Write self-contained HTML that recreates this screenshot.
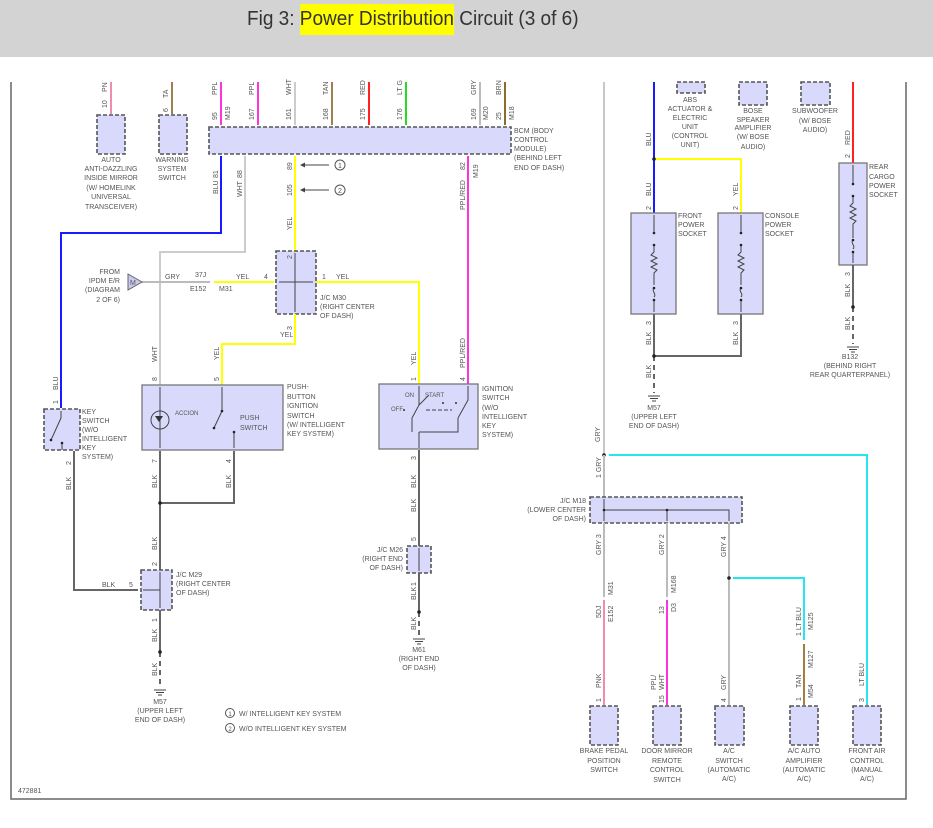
<!DOCTYPE html>
<html><head><meta charset="utf-8"><style>
html,body{margin:0;padding:0;background:#fff;width:933px;height:828px;overflow:hidden}
.hdr{position:absolute;left:0;top:0;width:933px;height:57px;background:#d3d3d3}
.ttl{position:absolute;left:247px;top:8px;font:20px "Liberation Sans",sans-serif;color:#333;white-space:nowrap;transform:scaleX(0.95);transform-origin:0 0}
.hl{background:#ffff00;padding:4px 0 5px}
svg{position:absolute;left:0;top:0}
text{font-family:"Liberation Sans",sans-serif;font-size:7px;fill:#555}
.c{text-anchor:middle}.r{text-anchor:end}
.box{fill:#d9d9fb;stroke:#555;stroke-width:1.6;stroke-dasharray:4,2}
.sbox{fill:#d9d9fb;stroke:#777;stroke-width:1.3}
.w{fill:none;stroke-width:2}
</style></head><body>
<div class="hdr"></div>
<div class="ttl">Fig 3: <span class="hl">Power Distribution</span> Circuit (3 of 6)</div>
<svg width="933" height="828" viewBox="0 0 933 828">
<path d="M11 82V799H906V82" fill="none" stroke="#666" stroke-width="1.5"/>
<line x1="111" y1="82" x2="111" y2="114" stroke="#f08cb0" class="w"/>
<line x1="172" y1="82" x2="172" y2="114" stroke="#a0804a" class="w"/>
<line x1="221" y1="82" x2="221" y2="125" stroke="#ff33dd" class="w"/>
<line x1="258" y1="82" x2="258" y2="125" stroke="#ff33dd" class="w"/>
<line x1="295" y1="82" x2="295" y2="125" stroke="#cccccc" class="w"/>
<line x1="332" y1="82" x2="332" y2="125" stroke="#a0804a" class="w"/>
<line x1="369" y1="82" x2="369" y2="125" stroke="#ff2020" class="w"/>
<line x1="406" y1="82" x2="406" y2="125" stroke="#22dd22" class="w"/>
<line x1="480" y1="82" x2="480" y2="125" stroke="#bbbbbb" class="w"/>
<line x1="505" y1="82" x2="505" y2="125" stroke="#8b6d2a" class="w"/>
<g>
<text transform="translate(107,108) rotate(-90)">10</text><text transform="translate(107,92) rotate(-90)">PN</text>
<text transform="translate(168,98) rotate(-90)">TA</text><text transform="translate(168,112) rotate(-90)">6</text>
<text transform="translate(217,120) rotate(-90)">95</text><text transform="translate(217,95) rotate(-90)">PPL</text><text transform="translate(230,120) rotate(-90)">M19</text>
<text transform="translate(254,120) rotate(-90)">167</text><text transform="translate(254,95) rotate(-90)">PPL</text>
<text transform="translate(291,120) rotate(-90)">161</text><text transform="translate(291,95) rotate(-90)">WHT</text>
<text transform="translate(328,120) rotate(-90)">168</text><text transform="translate(328,95) rotate(-90)">TAN</text>
<text transform="translate(365,120) rotate(-90)">175</text><text transform="translate(365,95) rotate(-90)">RED</text>
<text transform="translate(402,120) rotate(-90)">176</text><text transform="translate(402,95) rotate(-90)">LT G</text>
<text transform="translate(476,120) rotate(-90)">169</text><text transform="translate(476,95) rotate(-90)">GRY</text><text transform="translate(488,120) rotate(-90)">M20</text>
<text transform="translate(501,120) rotate(-90)">25</text><text transform="translate(501,95) rotate(-90)">BRN</text><text transform="translate(514,120) rotate(-90)">M18</text>
</g>
<rect x="97" y="115" width="28" height="39" class="box"/>
<rect x="159" y="115" width="28" height="39" class="box"/>
<text class="c" x="111" y="162">AUTO</text><text class="c" x="111" y="171">ANTI-DAZZLING</text><text class="c" x="111" y="180">INSIDE MIRROR</text><text class="c" x="111" y="190">(W/ HOMELINK</text><text class="c" x="111" y="199">UNIVERSAL</text><text class="c" x="111" y="209">TRANSCEIVER)</text>
<text class="c" x="172" y="162">WARNING</text><text class="c" x="172" y="171">SYSTEM</text><text class="c" x="172" y="180">SWITCH</text>
<rect x="209" y="127" width="302" height="27" class="box"/>
<text x="514" y="133">BCM (BODY</text><text x="514" y="142">CONTROL</text><text x="514" y="151">MODULE)</text><text x="514" y="160">(BEHIND LEFT</text><text x="514" y="170">END OF DASH)</text>
<path d="M221 156V233H61V408" stroke="#1a1aff" class="w"/>
<path d="M245 156V252H160V385" stroke="#cccccc" class="w"/>
<path d="M295 156V251" stroke="#ffff00" class="w"/>
<path d="M468 156V384" stroke="#ff33dd" class="w"/>
<text transform="translate(218,178) rotate(-90)">81</text><text transform="translate(218,194) rotate(-90)">BLU</text>
<text transform="translate(242,178) rotate(-90)">88</text><text transform="translate(242,197) rotate(-90)">WHT</text>
<text transform="translate(292,170) rotate(-90)">89</text><text transform="translate(292,196) rotate(-90)">105</text><text transform="translate(292,230) rotate(-90)">YEL</text>
<text transform="translate(465,170) rotate(-90)">82</text><text transform="translate(465,210) rotate(-90)">PPL/RED</text><text transform="translate(478,178) rotate(-90)">M19</text>
<path d="M302 165H329M302 190H329" stroke="#444" stroke-width="1"/>
<path d="M300 165l5-2.5v5zM300 190l5-2.5v5z" fill="#444"/>
<circle cx="340" cy="165" r="5" fill="none" stroke="#555"/><text class="c" x="340" y="168">1</text>
<circle cx="340" cy="190" r="5" fill="none" stroke="#555"/><text class="c" x="340" y="193">2</text>
<rect x="276" y="251" width="40" height="63" class="box"/>
<path d="M295 253V312M279 282H313" stroke="#444" stroke-width="1" fill="none"/>
<text x="320" y="300">J/C M30</text><text x="320" y="309">(RIGHT CENTER</text><text x="320" y="318">OF DASH)</text>
<path d="M316 282H419V384" stroke="#ffff00" class="w"/>
<path d="M295 314V344H222V385" stroke="#ffff00" class="w"/>
<path d="M214 282H274" stroke="#ffff00" class="w"/>
<path d="M142 282H210" stroke="#bbbbbb" class="w"/>
<path d="M128 274L142 282L128 290Z" fill="#c8c8f0" stroke="#666"/><text x="130" y="285">M</text>
<text x="165" y="279">GRY</text><text x="195" y="277">37J</text><text x="190" y="291">E152</text><text x="219" y="291">M31</text>
<text x="236" y="279">YEL</text><text x="264" y="279">4</text><text x="322" y="279">1</text><text x="336" y="279">YEL</text>
<text transform="translate(292,259) rotate(-90)">2</text><text transform="translate(292,330) rotate(-90)">3</text><text x="280" y="337">YEL</text>
<text class="r" x="120" y="274">FROM</text><text class="r" x="120" y="283">IPDM E/R</text><text class="r" x="120" y="292">(DIAGRAM</text><text class="r" x="120" y="302">2 OF 6)</text>
<text transform="translate(157,362) rotate(-90)">WHT</text><text transform="translate(157,381) rotate(-90)">8</text>
<text transform="translate(219,360) rotate(-90)">YEL</text><text transform="translate(219,381) rotate(-90)">5</text>
<text transform="translate(416,365) rotate(-90)">YEL</text><text transform="translate(416,381) rotate(-90)">1</text>
<text transform="translate(465,368) rotate(-90)">PPL/RED</text><text transform="translate(465,381) rotate(-90)">4</text>
<text transform="translate(58,390) rotate(-90)">BLU</text><text transform="translate(58,404) rotate(-90)">1</text>
<rect x="44" y="409" width="36" height="41" class="box"/>
<path d="M61 411V418L51 440M62 443V450" stroke="#444" stroke-width="1" fill="none"/>
<circle cx="51" cy="440" r="1.3" fill="#222"/><circle cx="62" cy="443" r="1.3" fill="#222"/>
<text x="82" y="414">KEY</text><text x="82" y="423">SWITCH</text><text x="82" y="432">(W/O</text><text x="82" y="441">INTELLIGENT</text><text x="82" y="450">KEY</text><text x="82" y="459">SYSTEM)</text>
<rect x="142" y="385" width="141" height="65" class="sbox"/>
<path d="M160 387V448M222 387V411L214 428M234 432V448" stroke="#444" stroke-width="1" fill="none"/>
<circle cx="222" cy="411" r="1.3" fill="#222"/><circle cx="214" cy="428" r="1.3" fill="#222"/><circle cx="234" cy="432" r="1.3" fill="#222"/>
<circle cx="160" cy="420" r="9" fill="none" stroke="#444"/>
<path d="M155 416h8l-4 6z" fill="#333"/>
<text x="175" y="415" style="font-size:6px">ACCION</text>
<text x="240" y="420">PUSH</text><text x="240" y="430">SWITCH</text>
<text x="287" y="389">PUSH-</text><text x="287" y="399">BUTTON</text><text x="287" y="408">IGNITION</text><text x="287" y="418">SWITCH</text><text x="287" y="427">(W/ INTELLIGENT</text><text x="287" y="436">KEY SYSTEM)</text>
<rect x="379" y="384" width="99" height="65" class="sbox"/>
<path d="M419 386V405L429 395M468 386V400L458 418M419 405L412 418V432M458 418V432H419M419 432V448" stroke="#444" stroke-width="1" fill="none"/>
<path d="M426 410H452" stroke="#444" stroke-dasharray="4,2"/>
<text x="405" y="397" style="font-size:6px">ON</text><text x="425" y="397" style="font-size:6px">START</text><text x="391" y="411" style="font-size:6px">OFF</text>
<circle cx="443" cy="403" r="1" fill="#333"/><circle cx="456" cy="403" r="1" fill="#333"/><circle cx="404" cy="410" r="1" fill="#333"/>
<text x="482" y="391">IGNITION</text><text x="482" y="400">SWITCH</text><text x="482" y="410">(W/O</text><text x="482" y="419">INTELLIGENT</text><text x="482" y="428">KEY</text><text x="482" y="437">SYSTEM)</text>
<path d="M74 451V590H138" stroke="#666" class="w"/>
<path d="M160 451V570M234 451V503H160" stroke="#666" class="w"/>
<circle cx="160" cy="503" r="1.8" fill="#222"/>
<text transform="translate(71,465) rotate(-90)">2</text><text transform="translate(71,490) rotate(-90)">BLK</text>
<text transform="translate(157,463) rotate(-90)">7</text><text transform="translate(157,488) rotate(-90)">BLK</text>
<text transform="translate(231,463) rotate(-90)">4</text><text transform="translate(231,488) rotate(-90)">BLK</text>
<text transform="translate(157,550) rotate(-90)">BLK</text><text transform="translate(157,566) rotate(-90)">2</text>
<text x="102" y="587">BLK</text><text x="129" y="587">5</text>
<rect x="141" y="570" width="31" height="40" class="box"/>
<path d="M160 572V608M143 590H160" stroke="#444" stroke-width="1" fill="none"/>
<text x="176" y="577">J/C M29</text><text x="176" y="586">(RIGHT CENTER</text><text x="176" y="595">OF DASH)</text>
<path d="M160 610V652" stroke="#666" class="w"/>
<path d="M160 652V688" stroke="#666" stroke-width="2" stroke-dasharray="5,4"/>
<circle cx="160" cy="652" r="1.8" fill="#222"/>
<path d="M154 690h12M156 692.5h8M158 695h4" stroke="#444"/>
<text transform="translate(157,622) rotate(-90)">1</text><text transform="translate(157,642) rotate(-90)">BLK</text><text transform="translate(157,676) rotate(-90)">BLK</text>
<text class="c" x="160" y="704">M57</text><text class="c" x="160" y="713">(UPPER LEFT</text><text class="c" x="160" y="722">END OF DASH)</text>
<circle cx="230" cy="713" r="4.5" fill="none" stroke="#555"/><text class="c" x="230" y="716" style="font-size:6px">1</text><text x="239" y="716">W/ INTELLIGENT KEY SYSTEM</text>
<circle cx="230" cy="728" r="4.5" fill="none" stroke="#555"/><text class="c" x="230" y="731" style="font-size:6px">2</text><text x="239" y="731">W/O INTELLIGENT KEY SYSTEM</text>
<text x="18" y="793">472881</text>
<path d="M419 450V546M419 573V612" stroke="#666" class="w"/>
<path d="M419 612V636" stroke="#666" stroke-width="2" stroke-dasharray="5,4"/>
<circle cx="419" cy="612" r="1.8" fill="#222"/>
<path d="M413 639h12M415 641.5h8M417 644h4" stroke="#444"/>
<rect x="407" y="546" width="24" height="27" class="box"/>
<path d="M419 548V571" stroke="#444"/>
<text transform="translate(416,460) rotate(-90)">3</text><text transform="translate(416,488) rotate(-90)">BLK</text><text transform="translate(416,512) rotate(-90)">BLK</text><text transform="translate(416,541) rotate(-90)">5</text>
<text transform="translate(416,586) rotate(-90)">1</text><text transform="translate(416,600) rotate(-90)">BLK</text><text transform="translate(416,630) rotate(-90)">BLK</text>
<text class="r" x="403" y="552">J/C M26</text><text class="r" x="403" y="561">(RIGHT END</text><text class="r" x="403" y="570">OF DASH)</text>
<text class="c" x="419" y="652">M61</text><text class="c" x="419" y="661">(RIGHT END</text><text class="c" x="419" y="670">OF DASH)</text>
<path d="M604 82V455" stroke="#bbbbbb" stroke-width="1.6"/>
<text transform="translate(600,442) rotate(-90)">GRY</text>
<path d="M654 82V213" stroke="#1a1aff" class="w"/>
<path d="M654 159H741V213" stroke="#ffff00" class="w"/>
<circle cx="654" cy="159" r="1.8" fill="#222"/>
<text transform="translate(651,146) rotate(-90)">BLU</text><text transform="translate(651,196) rotate(-90)">BLU</text><text transform="translate(651,210) rotate(-90)">2</text>
<text transform="translate(738,196) rotate(-90)">YEL</text><text transform="translate(738,210) rotate(-90)">2</text>
<rect x="677" y="82" width="28" height="11" class="box"/>
<rect x="739" y="82" width="28" height="23" class="box"/>
<rect x="801" y="82" width="29" height="23" class="box"/>
<text class="c" x="690" y="102">ABS</text><text class="c" x="690" y="111">ACTUATOR &amp;</text><text class="c" x="690" y="120">ELECTRIC</text><text class="c" x="690" y="129">UNIT</text><text class="c" x="690" y="138">(CONTROL</text><text class="c" x="690" y="147">UNIT)</text>
<text class="c" x="753" y="113">BOSE</text><text class="c" x="753" y="122">SPEAKER</text><text class="c" x="753" y="130">AMPLIFIER</text><text class="c" x="753" y="139">(W/ BOSE</text><text class="c" x="753" y="149">AUDIO)</text>
<text class="c" x="815" y="113">SUBWOOFER</text><text class="c" x="815" y="123">(W/ BOSE</text><text class="c" x="815" y="132">AUDIO)</text>
<g id="sock">
<rect x="631" y="213" width="45" height="101" class="sbox"/>
<path d="M654 215V233M654 245V252l-3 3 6 3-6 3 6 3-6 3 6 3-3 3V285M654 288c-3 3 3 6 0 9M654 300V312" stroke="#444" fill="none" stroke-width="1"/>
<circle cx="654" cy="233" r="1.3" fill="#222"/><circle cx="654" cy="245" r="1.3" fill="#222"/><circle cx="654" cy="288" r="1.3" fill="#222"/><circle cx="654" cy="300" r="1.3" fill="#222"/>
</g>
<use href="#sock" transform="translate(87,0)"/>
<text x="678" y="218">FRONT</text><text x="678" y="227">POWER</text><text x="678" y="236">SOCKET</text>
<text x="765" y="218">CONSOLE</text><text x="765" y="227">POWER</text><text x="765" y="236">SOCKET</text>
<path d="M654 314V356M741 314V356H654" stroke="#666" class="w"/>
<path d="M654 356V393" stroke="#666" stroke-width="2" stroke-dasharray="5,4"/>
<circle cx="654" cy="356" r="1.8" fill="#222"/>
<path d="M648 396h12M650 398.5h8M652 401h4" stroke="#444"/>
<text transform="translate(651,325) rotate(-90)">3</text><text transform="translate(651,345) rotate(-90)">BLK</text><text transform="translate(651,378) rotate(-90)">BLK</text>
<text transform="translate(738,325) rotate(-90)">3</text><text transform="translate(738,345) rotate(-90)">BLK</text>
<text class="c" x="654" y="410">M57</text><text class="c" x="654" y="419">(UPPER LEFT</text><text class="c" x="654" y="428">END OF DASH)</text>
<path d="M853 82V163" stroke="#ff2020" class="w"/>
<text transform="translate(850,145) rotate(-90)">RED</text><text transform="translate(850,158) rotate(-90)">2</text>
<rect x="839" y="163" width="28" height="102" class="sbox"/>
<path d="M853 165V184M853 196V203l-3 3 6 3-6 3 6 3-6 3 6 3-3 3V238M853 240c-3 3 3 6 0 9M853 252V263" stroke="#444" fill="none" stroke-width="1"/>
<circle cx="853" cy="184" r="1.3" fill="#222"/><circle cx="853" cy="196" r="1.3" fill="#222"/><circle cx="853" cy="240" r="1.3" fill="#222"/><circle cx="853" cy="252" r="1.3" fill="#222"/>
<text x="869" y="169">REAR</text><text x="869" y="179">CARGO</text><text x="869" y="188">POWER</text><text x="869" y="197">SOCKET</text>
<path d="M853 265V307" stroke="#666" class="w"/>
<path d="M853 307V344" stroke="#666" stroke-width="2" stroke-dasharray="5,4"/>
<circle cx="853" cy="307" r="1.8" fill="#222"/>
<path d="M847 347h12M849 349.5h8M851 352h4" stroke="#444"/>
<text transform="translate(850,276) rotate(-90)">3</text><text transform="translate(850,297) rotate(-90)">BLK</text><text transform="translate(850,330) rotate(-90)">BLK</text>
<text class="c" x="850" y="359">B132</text><text class="c" x="850" y="368">(BEHIND RIGHT</text><text class="c" x="850" y="377">REAR QUARTERPANEL)</text>
<circle cx="604" cy="455" r="1.8" fill="#222"/>
<path d="M609 455H867V705" stroke="#22e6f0" class="w"/>
<path d="M604 455V497" stroke="#bbbbbb" class="w"/>
<text transform="translate(601,478) rotate(-90)">1 GRY</text>
<rect x="590" y="497" width="152" height="26" class="box"/>
<path d="M604 499V521M604 510H729V521M667 510V521" stroke="#444" stroke-width="1" fill="none"/>
<circle cx="604" cy="510" r="1.3" fill="#222"/><circle cx="667" cy="510" r="1.3" fill="#222"/>
<text class="r" x="586" y="503">J/C M18</text><text class="r" x="586" y="512">(LOWER CENTER</text><text class="r" x="586" y="521">OF DASH)</text>
<path d="M604 523V597M667 523V597M729 523V705" stroke="#bbbbbb" class="w"/>
<path d="M604 600V705" stroke="#f08cb0" class="w"/>
<path d="M667 600V705" stroke="#ff33dd" class="w"/>
<circle cx="729" cy="578" r="1.8" fill="#222"/>
<path d="M733 578H804V640" stroke="#22e6f0" class="w"/>
<path d="M804 644V705" stroke="#a08040" class="w"/>
<text transform="translate(601,555) rotate(-90)">GRY 3</text><text transform="translate(664,555) rotate(-90)">GRY 2</text><text transform="translate(726,557) rotate(-90)">GRY 4</text>
<text transform="translate(613,595) rotate(-90)">M31</text><text transform="translate(676,593) rotate(-90)">M168</text>
<text transform="translate(601,618) rotate(-90)">5DJ</text><text transform="translate(613,622) rotate(-90)">E152</text>
<text transform="translate(664,614) rotate(-90)">13</text><text transform="translate(676,612) rotate(-90)">D3</text>
<text transform="translate(801,636) rotate(-90)">1 LT BLU</text><text transform="translate(813,630) rotate(-90)">M125</text>
<text transform="translate(813,668) rotate(-90)">M127</text><text transform="translate(801,688) rotate(-90)">TAN</text><text transform="translate(813,698) rotate(-90)">M54</text><text transform="translate(801,701) rotate(-90)">1</text>
<text transform="translate(601,688) rotate(-90)">PNK</text><text transform="translate(601,702) rotate(-90)">1</text>
<text transform="translate(656,690) rotate(-90)">PPL/</text><text transform="translate(664,690) rotate(-90)">WHT</text><text transform="translate(664,703) rotate(-90)">15</text>
<text transform="translate(726,690) rotate(-90)">GRY</text><text transform="translate(726,702) rotate(-90)">4</text>
<text transform="translate(864,686) rotate(-90)">LT BLU</text><text transform="translate(864,702) rotate(-90)">3</text>
<rect x="590" y="706" width="28" height="39" class="box"/>
<rect x="653" y="706" width="28" height="39" class="box"/>
<rect x="715" y="706" width="29" height="39" class="box"/>
<rect x="790" y="706" width="28" height="39" class="box"/>
<rect x="853" y="706" width="28" height="39" class="box"/>
<text class="c" x="604" y="753">BRAKE PEDAL</text><text class="c" x="604" y="763">POSITION</text><text class="c" x="604" y="772">SWITCH</text>
<text class="c" x="667" y="753">DOOR MIRROR</text><text class="c" x="667" y="763">REMOTE</text><text class="c" x="667" y="772">CONTROL</text><text class="c" x="667" y="782">SWITCH</text>
<text class="c" x="729" y="753">A/C</text><text class="c" x="729" y="763">SWITCH</text><text class="c" x="729" y="772">(AUTOMATIC</text><text class="c" x="729" y="781">A/C)</text>
<text class="c" x="804" y="753">A/C AUTO</text><text class="c" x="804" y="763">AMPLIFIER</text><text class="c" x="804" y="772">(AUTOMATIC</text><text class="c" x="804" y="781">A/C)</text>
<text class="c" x="867" y="753">FRONT AIR</text><text class="c" x="867" y="763">CONTROL</text><text class="c" x="867" y="772">(MANUAL</text><text class="c" x="867" y="781">A/C)</text>
</svg>
</body></html>
